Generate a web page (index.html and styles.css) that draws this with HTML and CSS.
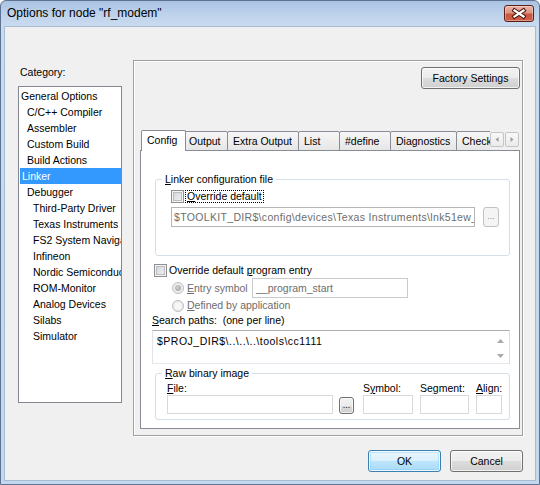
FILE: index.html
```html
<!DOCTYPE html>
<html>
<head>
<meta charset="utf-8">
<title>Options for node "rf_modem"</title>
<link rel="stylesheet" href="styles.css">
</head>
<body>
<div class="window">
  <div class="titlebar">
    <span class="title">Options for node "rf_modem"</span>
    <div class="close">
      <svg width="28" height="15" viewBox="0 0 28 15">
        <path d="M9.5 4.5 L18.5 10.5 M18.5 4.5 L9.5 10.5" stroke="#4a1610" stroke-width="4.2" stroke-linecap="square" fill="none"/>
        <path d="M9.5 4.5 L18.5 10.5 M18.5 4.5 L9.5 10.5" stroke="#ffffff" stroke-width="2.2" stroke-linecap="square" fill="none"/>
      </svg>
    </div>
  </div>
  <div class="client">
    <div class="main">
      <div class="category">
        <div class="cat-label">Category:</div>
        <ul class="catlist">
          <li class="l0">General Options</li>
          <li class="l1">C/C++ Compiler</li>
          <li class="l1">Assembler</li>
          <li class="l1">Custom Build</li>
          <li class="l1">Build Actions</li>
          <li class="sel">Linker</li>
          <li class="l1">Debugger</li>
          <li class="l2">Third-Party Driver</li>
          <li class="l2">Texas Instruments</li>
          <li class="l2">FS2 System Navigator</li>
          <li class="l2">Infineon</li>
          <li class="l2">Nordic Semiconductor</li>
          <li class="l2">ROM-Monitor</li>
          <li class="l2">Analog Devices</li>
          <li class="l2">Silabs</li>
          <li class="l2">Simulator</li>
        </ul>
      </div>
      <div class="panel">
        <div class="panel-top">
          <button class="btn factory">Factory Settings</button>
        </div>
        <div class="tabstrip">
          <div class="tablist">
            <div class="tab active t-config">Config</div>
            <div class="tab t-output">Output</div>
            <div class="tab t-extra">Extra Output</div>
            <div class="tab t-list">List</div>
            <div class="tab t-define">#define</div>
            <div class="tab t-diag">Diagnostics</div>
            <div class="tab t-check">Checksum</div>
          </div>
          <div class="tabarrows">
            <div class="arrow">
              <svg width="12" height="13" viewBox="0 0 12 13"><polygon points="7.5,4 4.5,6.5 7.5,9" fill="#9a9a9a"/></svg>
            </div>
            <div class="arrow">
              <svg width="12" height="13" viewBox="0 0 12 13"><polygon points="4.5,4 7.5,6.5 4.5,9" fill="#9a9a9a"/></svg>
            </div>
          </div>
        </div>
        <div class="tabpage">
          <div class="group group-linker">
            <div class="gtitle gtitle-linker"><u>L</u>inker configuration file</div>
            <div class="row row-check">
              <span class="check"></span>
              <span class="focus-label"><u>O</u>verride default</span>
            </div>
            <div class="row row-file">
              <div class="textbox disabled file-path path">$TOOLKIT_DIR$\config\devices\Texas Instruments\lnk51ew_</div>
              <div class="dots disabled-btn">...</div>
            </div>
          </div>
          <div class="row row-entry">
            <span class="check"></span>
            <span class="entry-label">Override default <u>p</u>rogram entry</span>
          </div>
          <div class="row row-radio1">
            <span class="radio"><span class="dot"></span></span>
            <span class="radio-label fixed"><u>E</u>ntry symbol</span>
            <div class="textbox disabled entry-input">__program_start</div>
          </div>
          <div class="row row-radio2">
            <span class="radio"></span>
            <span class="radio-label"><u>D</u>efined by application</span>
          </div>
          <div class="search-label"><u>S</u>earch paths:&nbsp; (one per line)</div>
          <div class="textarea">
            <div class="textarea-text path">$PROJ_DIR$\..\..\..\tools\cc1111</div>
            <div class="vscroll">
              <div class="vcell">
                <svg width="7" height="4" viewBox="0 0 7 4"><polygon points="0,4 3.5,0 7,4" fill="#a9a9a9"/></svg>
              </div>
              <div class="vcell">
                <svg width="7" height="4" viewBox="0 0 7 4"><polygon points="0,0 3.5,4 7,0" fill="#a9a9a9"/></svg>
              </div>
            </div>
          </div>
          <div class="group group-raw">
            <div class="gtitle gtitle-raw"><u>R</u>aw binary image</div>
            <div class="fields">
              <div class="field f-file">
                <div class="flabel"><u>F</u>ile:</div>
                <div class="finput"></div>
              </div>
              <div class="dots raw-dots">...</div>
              <div class="field f-symbol">
                <div class="flabel">S<u>y</u>mbol:</div>
                <div class="finput"></div>
              </div>
              <div class="field f-segment">
                <div class="flabel">Se<u>g</u>ment:</div>
                <div class="finput"></div>
              </div>
              <div class="field f-align">
                <div class="flabel"><u>A</u>lign:</div>
                <div class="finput"></div>
              </div>
            </div>
          </div>
        </div>
      </div>
    </div>
    <div class="actions">
      <button class="btn default">OK</button>
      <button class="btn">Cancel</button>
    </div>
  </div>
</div>
</body>
</html>
```
FILE: styles.css
```css
* { box-sizing: border-box; }
html, body { margin: 0; padding: 0; }
body {
  background: #ffffff;
  font-family: "Liberation Sans", Arial, sans-serif;
  font-size: 10.5px;
  color: #000;
}
u { text-decoration: underline; text-underline-offset: 1px; }

.window {
  width: 540px;
  height: 485px;
  border: 1px solid #5d7391;
  border-radius: 6px 6px 0 0;
  background: linear-gradient(#a9c3e2 0, #bcd1ea 12px, #c9dbef 25px, #c3d7ed 100%);
  display: flex;
  flex-direction: column;
  overflow: hidden;
}
.titlebar {
  height: 25px;
  flex: none;
  display: flex;
  align-items: center;
  justify-content: space-between;
  padding: 0 5px 0 6px;
}
.title { font-size: 12px; line-height: 15px; color: #000; }
.close {
  width: 30px;
  height: 17px;
  border: 1px solid #5a2018;
  border-radius: 3px;
  background: linear-gradient(#ebb4a6 0%, #de9483 45%, #c9573f 55%, #cf6048 100%);
  box-shadow: inset 0 0 0 1px rgba(255,255,255,0.35);
  display: flex;
}
.close svg { display: block; }

.client {
  flex: 1;
  margin: 0 3px 3px 3px;
  border: 1px solid #a7bbd3;
  background: #f0f0f0;
  padding: 33px 12px 0 13px;
}
.main { display: flex; gap: 11px; }

/* Category list */
.category { width: 104px; flex: none; }
.cat-label { margin-top: 5px; line-height: 14px; padding-left: 2px; }
.catlist {
  margin: 7px 0 0 0;
  padding: 1px 0 0 1px;
  list-style: none;
  height: 317px;
  border: 1px solid #828790;
  background: #fff;
  overflow: hidden;
}
.catlist li { height: 16px; line-height: 16px; white-space: nowrap; overflow: hidden; }
.catlist .l0 { padding-left: 1px; }
.catlist .l1 { padding-left: 7px; }
.catlist .l2 { padding-left: 13px; }
.catlist .sel { padding-left: 2px; background: #3399ff; color: #fff; }

/* Right panel */
.panel {
  width: 390px;
  height: 376px;
  flex: none;
  border: 1px solid #a0a0a0;
  box-shadow: inset 1px 1px 0 #fff, 1px 1px 0 #fff;
  padding: 6px 2px 6px 6px;
  display: flex;
  flex-direction: column;
}
.panel-top { display: flex; justify-content: flex-end; height: 22px; flex: none; }

.btn {
  font-family: "Liberation Sans", Arial, sans-serif;
  font-size: 10.5px;
  color: #000;
  height: 22px;
  padding: 0;
  margin: 0;
  border: 1px solid #707070;
  border-radius: 3px;
  background: linear-gradient(#f2f2f2 0%, #ebebeb 50%, #dddddd 51%, #cfcfcf 100%);
  box-shadow: inset 0 0 0 1px rgba(255,255,255,0.7);
}
.factory { width: 99px; }
.btn.default {
  border-color: #3c7fb1;
  background: linear-gradient(#eaf6fd 0%, #d9f0fc 50%, #bee6fd 51%, #a7d9f5 100%);
  box-shadow: inset 0 0 0 1px rgba(255,255,255,0.8), inset 0 0 0 2px rgba(120,200,240,0.35);
}

/* Tabs */
.tabstrip {
  margin-top: 41px;
  height: 21px;
  flex: none;
  display: flex;
  margin-bottom: -1px;
  position: relative;
  z-index: 1;
}
.tablist {
  flex: 1;
  display: flex;
  align-items: flex-end;
  padding-left: 3px;
  overflow: hidden;
}
.tab {
  flex: none;
  height: 20px;
  border: 1px solid #898c95;
  border-radius: 2px 2px 0 0;
  background: linear-gradient(#f6f6f6, #e6e6e6);
  padding: 2px 0 0 5px;
  line-height: 14px;
  white-space: nowrap;
  overflow: hidden;
  margin-left: -1px;
}
.tab.active {
  height: 21px;
  border-bottom: none;
  background: #fff;
  margin: 0 -2px 0 -2px;
  position: relative;
  z-index: 2;
}
.t-config { width: 45px; }
.t-output { width: 45px; }
.t-extra { width: 72px; }
.t-list { width: 42px; }
.t-define { width: 52px; }
.t-diag { width: 67px; }
.t-check { width: 60px; }

.tabarrows {
  flex: none;
  display: flex;
  gap: 1px;
  padding-top: 2px;
  padding-right: 1px;
}
.arrow {
  width: 14px;
  height: 15px;
  border: 1px solid #c5c5c5;
  border-radius: 2px;
  background: linear-gradient(#f8f8f8, #ebebeb);
}
.arrow svg { display: block; }

.tabpage {
  height: 279px;
  flex: none;
  border: 1px solid #898c95;
  background: #fff;
  padding: 0 9px 0 11px;
}

/* Group boxes */
.group {
  border: 1px solid #d5dfe5;
  border-radius: 3px;
  margin-left: 3px;
}
.group-linker { margin-top: 28px; padding: 0 0 28px 15px; }
.group-raw { margin-top: 9px; padding: 0 0 5px 11px; }
.gtitle {
  width: max-content;
  margin-top: -8px;
  line-height: 14px;
  padding: 0 3px;
  background: #fff;
}
.gtitle-linker { margin-left: -9px; }
.gtitle-raw { margin-left: -5px; }

.row { display: flex; align-items: center; }
.row-check { margin-top: 4px; height: 13px; }
.row-file { margin-top: 4px; height: 20px; }

.check {
  width: 13px;
  height: 13px;
  flex: none;
  border: 1px solid #8e8f8f;
  background: linear-gradient(135deg, #cdd1d6, #f6f6f6);
  box-shadow: inset 0 0 0 1px #f4f4f4, inset 0 0 0 2px #b9bdc2;
}
.focus-label {
  margin-left: 1px;
  line-height: 11px;
  height: 13px;
  padding: 0 1px;
  border: 1px dotted #000;
}

.path { letter-spacing: 0.4px; }

.textbox {
  height: 20px;
  border: 1px solid #b5b5b5;
  background: #fff;
  line-height: 18px;
  padding-left: 2px;
  white-space: nowrap;
  overflow: hidden;
}
.textbox.disabled { color: #6d6d6d; }
.file-path { width: 304px; flex: none; letter-spacing: 0.33px; }
.dots {
  flex: none;
  text-align: center;
  border-radius: 3px;
  font-size: 9px;
}
.disabled-btn {
  width: 16px;
  height: 20px;
  margin-left: 8px;
  line-height: 17px;
  color: #8a8a8a;
  border: 1px solid #c2c2c2;
  background: #f4f4f4;
}

.row-entry { margin-top: 8px; height: 13px; padding-left: 2px; }
.entry-label { margin-left: 2px; line-height: 13px; }

.row-radio1 { margin-top: 1px; height: 20px; padding-left: 20px; }
.row-radio2 { margin-top: 1px; height: 13px; padding-left: 20px; }
.radio {
  width: 12px;
  height: 12px;
  flex: none;
  border-radius: 50%;
  border: 1px solid #bdbdbd;
  background: radial-gradient(circle at 50% 50%, #f7f7f7 30%, #e1e1e1 100%);
  display: flex;
  align-items: center;
  justify-content: center;
}
.dot {
  width: 6px;
  height: 6px;
  border-radius: 50%;
  background: radial-gradient(circle at 40% 40%, #d0d0d0, #9c9c9c);
}
.radio-label { margin-left: 3px; color: #6d6d6d; line-height: 13px; white-space: nowrap; }
.radio-label.fixed { width: 65px; flex: none; }
.entry-input { width: 156px; border-color: #cacaca; padding-left: 3px; }

.search-label { margin-top: 1px; line-height: 14px; }

.textarea {
  margin-top: 3px;
  height: 34px;
  border: 1px solid;
  border-color: #abadb3 #dbdfe6 #e3e9ef #e2e3ea;
  background: #fff;
  display: flex;
}
.textarea-text { flex: 1; padding: 3px 0 0 4px; line-height: 14px; white-space: nowrap; letter-spacing: 0.5px; }
.vscroll {
  width: 17px;
  flex: none;
  padding-top: 2px;
  display: flex;
  flex-direction: column;
}
.vcell { height: 16px; display: flex; align-items: center; justify-content: center; }
.vcell:last-child { height: 14px; }
.vcell svg { display: block; }

/* Raw binary fields */
.fields { display: flex; align-items: flex-end; margin-top: 1px; }
.field { display: flex; flex-direction: column; flex: none; }
.flabel { line-height: 14px; white-space: nowrap; }
.finput { height: 19px; border: 1px solid #d9d9d9; background: #fff; }
.f-file { width: 166px; }
.raw-dots {
  width: 15px;
  height: 17px;
  margin-left: 6px;
  line-height: 14px;
  border: 1px solid #707070;
  background: linear-gradient(#f2f2f2 0%, #ebebeb 50%, #dddddd 51%, #cfcfcf 100%);
  box-shadow: inset 0 0 0 1px rgba(255,255,255,0.7);
}
.f-symbol { width: 50px; margin-left: 9px; }
.f-segment { width: 49px; margin-left: 7px; }
.f-align { width: 26px; margin-left: 7px; }

/* Bottom buttons */
.actions {
  margin-top: 14px;
  display: flex;
  justify-content: flex-end;
  gap: 9px;
}
.actions .btn { width: 73px; }
```
